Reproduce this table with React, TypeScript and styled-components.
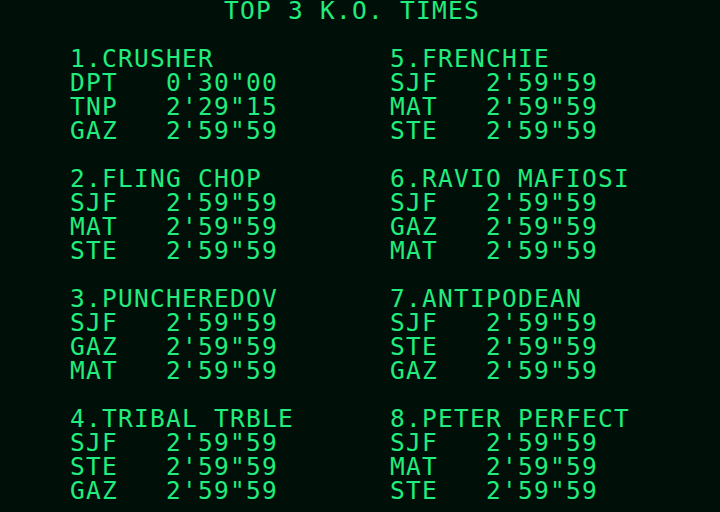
import React from "react";
import styled, { createGlobalStyle } from "styled-components";

const Global = createGlobalStyle`
  html, body { margin: 0; padding: 0; background: #000f08; }
  #root { width: 720px; height: 512px; overflow: hidden; }
`;

const Screen = styled.div`
  width: 720px;
  height: 512px;
  background: #000f08;
  color: #22ec7c;
  font-family: "DejaVu Sans Mono", "Liberation Mono", monospace;
  font-size: 24.5px;
  letter-spacing: 1.25px;
  box-sizing: border-box;
  padding: 0 0 0 70px;
  display: flex;
  flex-direction: column;
`;

const Line = styled.div`
  height: 24px;
  line-height: 24px;
  white-space: pre;
`;

const Title = styled(Line)`
  margin-top: -1px;
  padding-left: 154px;
  margin-bottom: 24px;
`;

const Grid = styled.div`
  display: grid;
  grid-template-columns: 320px 1fr;
  row-gap: 24px;
`;

const Block = styled.div`
  display: flex;
  flex-direction: column;
`;

type Entry = { name: string; times: [string, string][] };

const data: Entry[] = [
  { name: "1.CRUSHER", times: [["DPT", "0'30\"00"], ["TNP", "2'29\"15"], ["GAZ", "2'59\"59"]] },
  { name: "5.FRENCHIE", times: [["SJF", "2'59\"59"], ["MAT", "2'59\"59"], ["STE", "2'59\"59"]] },
  { name: "2.FLING CHOP", times: [["SJF", "2'59\"59"], ["MAT", "2'59\"59"], ["STE", "2'59\"59"]] },
  { name: "6.RAVIO MAFIOSI", times: [["SJF", "2'59\"59"], ["GAZ", "2'59\"59"], ["MAT", "2'59\"59"]] },
  { name: "3.PUNCHEREDOV", times: [["SJF", "2'59\"59"], ["GAZ", "2'59\"59"], ["MAT", "2'59\"59"]] },
  { name: "7.ANTIPODEAN", times: [["SJF", "2'59\"59"], ["STE", "2'59\"59"], ["GAZ", "2'59\"59"]] },
  { name: "4.TRIBAL TRBLE", times: [["SJF", "2'59\"59"], ["STE", "2'59\"59"], ["GAZ", "2'59\"59"]] },
  { name: "8.PETER PERFECT", times: [["SJF", "2'59\"59"], ["MAT", "2'59\"59"], ["STE", "2'59\"59"]] },
];

export default function App() {
  return (
    <>
      <Global />
      <Screen>
        <Title>TOP 3 K.O. TIMES</Title>
        <Grid>
          {data.map((e) => (
            <Block key={e.name}>
              <Line>{e.name}</Line>
              {e.times.map(([who, t], i) => (
                <Line key={i}>{`${who}   ${t}`}</Line>
              ))}
            </Block>
          ))}
        </Grid>
      </Screen>
    </>
  );
}
